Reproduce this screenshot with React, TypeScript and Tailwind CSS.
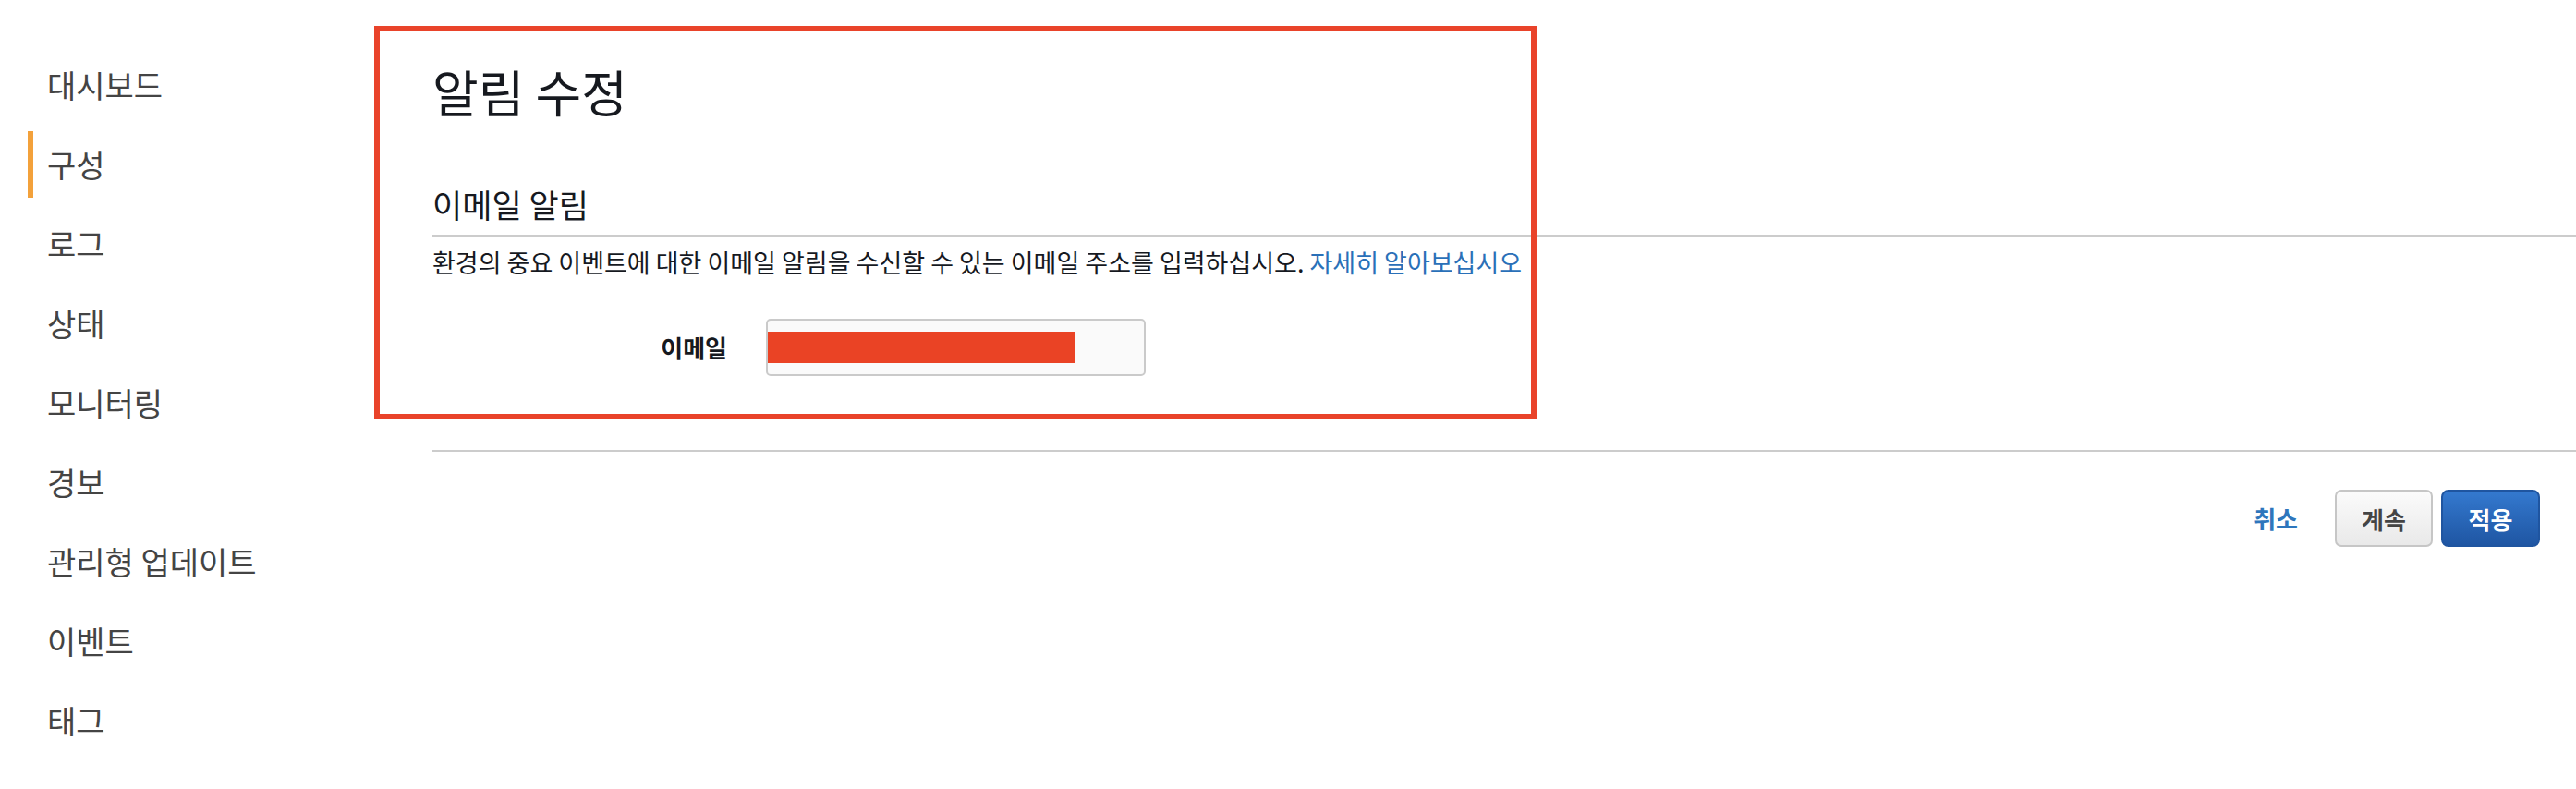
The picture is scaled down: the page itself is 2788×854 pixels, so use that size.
import React from "react";

const navItems = [
  "대시보드",
  "구성",
  "로그",
  "상태",
  "모니터링",
  "경보",
  "관리형 업데이트",
  "이벤트",
  "태그",
];

export default function App() {
  return (
    <div className="relative flex h-[854px] w-full bg-white font-['Noto_Sans_CJK_KR','Noto_Sans',sans-serif]">
      <nav className="flex w-[468px] shrink-0 flex-col pt-[49px]">
        {navItems.map((label) => {
          const active = label === "구성";
          return (
            <div key={label} className="flex h-[86px] items-center pl-[30px]">
              <span
                className={
                  active
                    ? "h-[72px] w-[6px] bg-[#f3a13b]"
                    : "h-[72px] w-[6px] bg-transparent"
                }
              />
              <span className="ml-[15px] text-[34px] leading-[44px] text-[#444444]">
                {label}
              </span>
            </div>
          );
        })}
      </nav>

      <main className="flex flex-1 flex-col pt-[69px]">
        <h1 className="text-[54px] leading-[60px] font-normal text-[#16191f]">
          알림 수정
        </h1>
        <h2 className="mt-[70px] text-[35px] leading-[44px] font-normal text-[#16191f]">
          이메일 알림
        </h2>
        <div className="mt-[11px] h-[2px] bg-[#cccccc]" />
        <p className="mt-[11px] text-[27px] leading-[34px] text-[#16191f]">
          환경의 중요 이벤트에 대한 이메일 알림을 수신할 수 있는 이메일 주소를
          입력하십시오.{" "}
          <a className="text-[#2a70b8]" href="#">
            자세히 알아보십시오
          </a>
        </p>

        <div className="mt-[44px] flex items-center">
          <label className="w-[319px] text-right text-[26px] leading-[32px] font-bold text-[#16191f]">
            이메일
          </label>
          <div className="ml-[42px] flex h-[62px] w-[411px] items-center rounded-[5px] border-2 border-[#cacaca] bg-[#fafafa]">
            <div className="h-[34px] w-[332px] bg-[#ea4325]" />
          </div>
        </div>

        <div className="mt-[80px] h-[2px] bg-[#cccccc]" />

        <div className="mt-[41px] flex items-center justify-end pr-[39px]">
          <a
            href="#"
            className="text-[26px] leading-[32px] font-bold text-[#2e76bc]"
          >
            취소
          </a>
          <button className="ml-[40px] flex h-[62px] w-[106px] items-center justify-center rounded-[7px] border-2 border-[#c6c6c6] bg-gradient-to-b from-[#fbfbfb] to-[#e9e9e9] text-[26px] font-bold text-[#444444]">
            계속
          </button>
          <button className="ml-[9px] flex h-[62px] w-[107px] items-center justify-center rounded-[8px] border-2 border-[#1f55a0] bg-gradient-to-b from-[#3479cf] to-[#1f56a3] text-[26px] font-bold text-white">
            적용
          </button>
        </div>
      </main>

      <div className="pointer-events-none absolute left-[405px] top-[28px] h-[426px] w-[1258px] border-[6px] border-[#e9432a]" />
    </div>
  );
}
